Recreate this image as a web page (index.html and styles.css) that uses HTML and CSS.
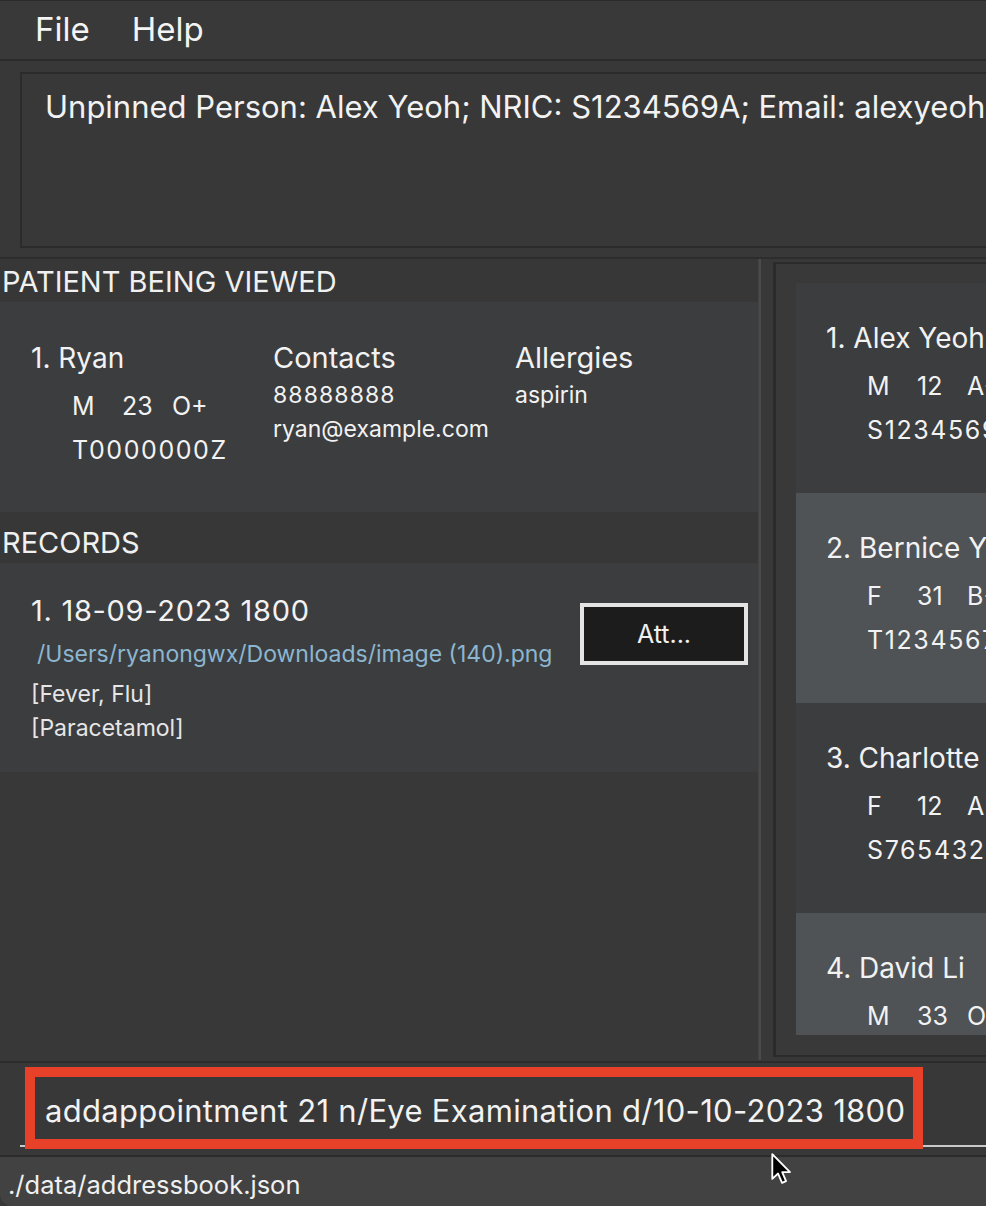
FILE: index.html
```html
<!DOCTYPE html>
<html lang="en">
<head>
<meta charset="utf-8">
<title>MediLink</title>
<link rel="stylesheet" href="styles.css">
</head>
<body>
<div class="window">
  <div class="menubar">
    <span class="menu-item">File</span>
    <span class="menu-item">Help</span>
  </div>

  <div class="result-area">
    <div class="result-box">Unpinned Person: Alex Yeoh; NRIC: S1234569A; Email: alexyeoh@example.com; Phone: 87438807; Gender: M; Age: 12; Blood Type: A+</div>
  </div>

  <div class="main">
    <div class="left">
      <div class="sec-title sec-patient">PATIENT BEING VIEWED</div>
      <div class="patient-card">
        <div class="col col-id">
          <div class="name">1. Ryan</div>
          <div class="meta"><span>M</span><span>23</span><span>O+</span></div>
          <div class="nric">T0000000Z</div>
        </div>
        <div class="col col-contacts">
          <div class="head">Contacts</div>
          <div class="small num">88888888</div>
          <div class="small">ryan@example.com</div>
        </div>
        <div class="col col-allergies">
          <div class="head">Allergies</div>
          <div class="small">aspirin</div>
        </div>
      </div>

      <div class="sec-title sec-records">RECORDS</div>
      <div class="record-card">
        <div class="rec-info">
          <div class="rec-date">1. 18-09-2023 1800</div>
          <div class="rec-path">/Users/ryanongwx/Downloads/image (140).png</div>
          <div class="rec-tag">[Fever, Flu]</div>
          <div class="rec-tag">[Paracetamol]</div>
        </div>
        <button class="att-btn">Att...</button>
      </div>
    </div>

    <div class="divider"></div>

    <div class="list-pane">
      <div class="list-viewport">
        <div class="person-card">
          <div class="name">1. Alex Yeoh</div>
          <div class="meta"><span>M</span><span>12</span><span>A+</span></div>
          <div class="nric">S1234569A</div>
        </div>
        <div class="person-card alt">
          <div class="name">2. Bernice Yu</div>
          <div class="meta"><span>F</span><span>31</span><span>B+</span></div>
          <div class="nric">T1234567B</div>
        </div>
        <div class="person-card">
          <div class="name">3. Charlotte Oliveiro</div>
          <div class="meta"><span>F</span><span>12</span><span>AB+</span></div>
          <div class="nric">S7654321C</div>
        </div>
        <div class="person-card alt">
          <div class="name">4. David Li</div>
          <div class="meta"><span>M</span><span>33</span><span>O+</span></div>
          <div class="nric">T7654321D</div>
        </div>
      </div>
    </div>
  </div>

  <div class="cmd-area">
    <div class="cmd-field">addappointment 21 n/Eye Examination d/10-10-2023 1800</div>
    <div class="highlight"></div>
  </div>

  <div class="status">./data/addressbook.json</div>

  <svg class="cursor" width="23" height="34" viewBox="0 0 16 24" aria-hidden="true">
    <path d="M1.5 1.5 L1.5 19 L5.6 15.2 L8.4 21.8 L11.2 20.6 L8.5 14.2 L14 14.2 Z" fill="#000" stroke="#fff" stroke-width="1.3" stroke-linejoin="round"/>
  </svg>
</div>
</body>
</html>
```

FILE: styles.css
```css
* { box-sizing: border-box; }

html, body {
  margin: 0;
  padding: 0;
  background: #383838;
}

body {
  width: 986px;
  height: 1206px;
  overflow: hidden;
  font-family: Inter, "Liberation Sans", Arial, sans-serif;
  color: #f2f2f2;
}

.window {
  position: relative;
  display: flex;
  flex-direction: column;
  width: 986px;
  height: 1206px;
  background: #383838;
  border-bottom-left-radius: 12px;
  overflow: hidden;
}

/* Menu bar */
.menubar {
  height: 61px;
  flex: none;
  display: flex;
  align-items: center;
  gap: 42px;
  padding-left: 35px;
  padding-bottom: 2px;
  background: #393939;
  border-top: 1px solid #2a2a2a;
  border-bottom: 2px solid #2b2b2b;
}

.menu-item {
  font-size: 33px;
  color: #f4f4f4;
}

/* Result display */
.result-area {
  flex: none;
  padding: 11px 0 9px 20px;
  border-bottom: 2px solid #2d2d2d;
}

.result-box {
  height: 176px;
  margin-right: -40px;
  border: 2px solid #2b2b2b;
  background: #383838;
  padding: 15px 0 0 23px;
  font-size: 31px;
  line-height: 36px;
  white-space: nowrap;
  overflow: hidden;
}

/* Main */
.main {
  flex: none;
  height: 802px;
  display: flex;
}

.left {
  width: 758px;
  flex: none;
  display: flex;
  flex-direction: column;
  background: #383838;
}

.sec-title {
  font-size: 29px;
  line-height: 40px;
  padding-left: 2px;
  color: #f0f0f0;
  background: #373737;
}

.sec-patient {
  height: 43px;
  padding-top: 3px;
}

.sec-records {
  height: 51px;
  padding-top: 11px;
}

.patient-card {
  height: 210px;
  background: #3c3d3f;
  padding: 36px 0 0 31px;
  display: grid;
  grid-template-columns: 242px 242px auto;
}

.name {
  font-size: 28px;
  line-height: 40px;
  white-space: nowrap;
}

.meta {
  display: grid;
  grid-template-columns: 50px 50px auto;
  font-size: 25px;
  line-height: 56px;
  padding-left: 41px;
  white-space: nowrap;
}

.nric {
  font-size: 25px;
  line-height: 32px;
  padding-left: 41px;
  letter-spacing: 1.6px;
  white-space: nowrap;
}

.head {
  font-size: 29px;
  line-height: 40px;
}

.small {
  font-size: 23px;
  line-height: 34px;
  white-space: nowrap;
}

.small.num {
  letter-spacing: 1.1px;
}

.record-card {
  height: 209px;
  background: #3c3d3f;
  padding: 28px 0 0 31px;
  display: flex;
  align-items: flex-start;
}

.rec-info {
  width: 549px;
  flex: none;
}

.rec-date {
  font-size: 29px;
  line-height: 40px;
  letter-spacing: 0.7px;
  white-space: nowrap;
}

.rec-path {
  font-size: 23px;
  line-height: 46px;
  padding-left: 6px;
  color: #8cb6cf;
  white-space: nowrap;
}

.rec-tag {
  font-size: 23px;
  line-height: 34px;
  color: #e6e6e6;
  white-space: nowrap;
}

.att-btn {
  margin-top: 12px;
  width: 168px;
  height: 62px;
  background: #1c1c1c;
  border: 4px solid #e4e4e4;
  color: #f0f0f0;
  font-family: Inter, "Liberation Sans", Arial, sans-serif;
  font-size: 25px;
  padding: 0;
}

.divider {
  width: 3px;
  flex: none;
  margin-bottom: 1px;
  background: #4b4b4b;
  border-left: 1px solid #424242;
}

.list-pane {
  flex: 1;
  min-width: 0;
  margin: 3px 0 4px 12px;
  display: flex;
  flex-direction: column;
  padding: 19px 0 20px 20px;
  border-left: 3px solid #2b2b2b;
  border-top: 2px solid #2b2b2b;
  border-bottom: 2px solid #2b2b2b;
  background: #393939;
  overflow: hidden;
}

.list-viewport {
  flex: 1;
  overflow: hidden;
}

.person-card {
  height: 210px;
  width: 400px;
  background: #3c3d3f;
  padding: 35px 0 0 30px;
}

.person-card.alt {
  background: #505356;
}

/* Command box */
.cmd-area {
  position: relative;
  flex: none;
  height: 96px;
  padding: 5px 0 0 20px;
  border-top: 2px solid #2b2b2b;
  border-bottom: 2px solid #2b2b2b;
}

.cmd-field {
  height: 79px;
  border-bottom: 2px solid #c9c9c9;
  padding: 8px 0 0 25px;
  display: flex;
  align-items: center;
  font-size: 31px;
  letter-spacing: 0.3px;
  white-space: nowrap;
}

.highlight {
  position: absolute;
  left: 25px;
  top: 4px;
  width: 898px;
  height: 82px;
  border: 10px solid #e8412a;
}

/* Status bar */
.status {
  flex: 1;
  background: #424242;
  padding: 4px 0 0 8px;
  font-size: 25.5px;
  line-height: 48px;
  color: #f0f0f0;
}

.cursor {
  position: absolute;
  left: 770px;
  top: 1152px;
}
```
